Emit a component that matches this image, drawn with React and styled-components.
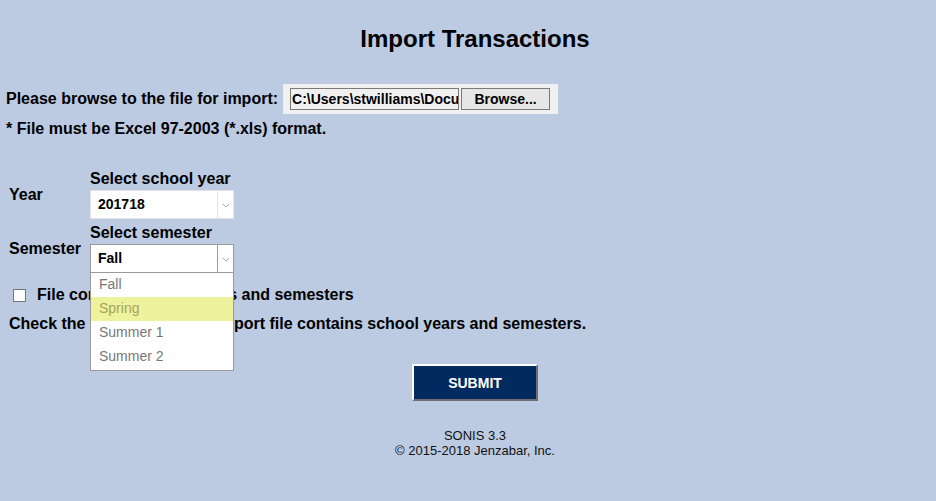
import React from "react";
import styled, { createGlobalStyle } from "styled-components";

const GlobalStyle = createGlobalStyle`
  html, body {
    margin: 0;
    padding: 0;
    background-color: #bccae2;
    font-family: "Liberation Sans", Arial, sans-serif;
    color: #000;
  }
`;

const Page = styled.div`
  width: 936px;
  min-height: 501px;
  box-sizing: border-box;
  padding-top: 25px;
`;

const Centered = styled.div`
  padding-left: 14px;
  text-align: center;
`;

const Title = styled.h1`
  margin: 0;
  font-size: 24px;
  line-height: 28px;
  font-weight: bold;
`;

const FileRow = styled.div`
  display: flex;
  align-items: center;
  margin-top: 31px;
  padding-left: 6px;
  height: 30px;
`;

const Label = styled.span`
  font-size: 16px;
  font-weight: bold;
  line-height: 20px;
  margin-right: ${(p) => p.$gap || 0}px;
`;

const FileBox = styled.div`
  display: flex;
  align-items: center;
  gap: 2px;
  height: 30px;
  padding: 0 8px 0 7px;
  box-sizing: border-box;
  background: #f0f0f0;
`;

const FilePath = styled.div`
  width: 169px;
  height: 22px;
  box-sizing: border-box;
  border: 1px solid #7a7a7a;
  background: #f0f0f0;
  font-size: 14px;
  font-weight: bold;
  line-height: 20px;
  padding-left: 1px;
  white-space: nowrap;
  overflow: hidden;
`;

const BrowseButton = styled.div`
  width: 89px;
  height: 22px;
  box-sizing: border-box;
  border: 1px solid #7a7a7a;
  background: #e6e6e6;
  font-size: 14px;
  font-weight: bold;
  line-height: 20px;
  text-align: center;
`;

const Note = styled.div`
  margin-top: 5px;
  padding-left: 6px;
  font-size: 16px;
  font-weight: bold;
  line-height: 20px;
`;

const FieldGrid = styled.div`
  display: grid;
  grid-template-columns: 81px 144px;
  row-gap: 5px;
  margin-top: 31px;
  padding-left: 9px;
  align-items: center;
`;

const FieldBlock = styled.div`
  position: relative;
  display: flex;
  flex-direction: column;
  gap: 2px;
`;

const Caption = styled.div`
  font-size: 16px;
  font-weight: bold;
  line-height: 18px;
  white-space: nowrap;
`;

const SelectBox = styled.div`
  display: flex;
  height: 29px;
  box-sizing: border-box;
  background: #fff;
  border: 1px solid ${(p) => (p.$open ? "#9a9a9a" : "#e2e2e2")};
`;

const SelectValue = styled.div`
  flex: 1;
  font-size: 14px;
  font-weight: bold;
  line-height: 27px;
  padding-left: 7px;
`;

const Arrow = styled.div`
  width: 15px;
  display: flex;
  align-items: center;
  justify-content: center;
  padding-top: 1px;
  border-left: 1px solid ${(p) => (p.$open ? "#9a9a9a" : "#e2e2e2")};
`;

const DropList = styled.div`
  position: absolute;
  left: 0;
  top: 100%;
  width: 144px;
  box-sizing: border-box;
  background: #fff;
  border: 1px solid #9a9a9a;
  border-top: none;
  padding-bottom: 1px;
  z-index: 5;
`;

const Option = styled.div`
  height: 24px;
  line-height: 23px;
  padding-left: 8px;
  font-size: 14px;
  color: ${(p) => (p.$active ? "#a4a45a" : "#777")};
  background: ${(p) => (p.$active ? "#eef29c" : "#fff")};
`;

const CheckRow = styled.div`
  display: flex;
  align-items: center;
  margin-top: 12px;
  padding-left: 13px;
  height: 20px;
`;

const CheckBox = styled.span`
  width: 13px;
  height: 13px;
  box-sizing: border-box;
  border: 1px solid #777;
  background: #fff;
  margin-right: 11px;
`;

const Hint = styled.div`
  margin-top: 9px;
  padding-left: 9px;
  font-size: 16px;
  font-weight: bold;
  line-height: 20px;
`;

const SubmitButton = styled.button`
  margin-top: 30px;
  width: 126px;
  height: 37px;
  box-sizing: border-box;
  background: #012a61;
  color: #fff;
  font-family: "Liberation Sans", Arial, sans-serif;
  font-size: 14px;
  font-weight: bold;
  border-style: solid;
  border-width: 2px;
  border-color: #ffffff #6f6f6f #6f6f6f #ffffff;
  cursor: pointer;
`;

const Footer = styled.div`
  margin-top: 27px;
  font-size: 13px;
  line-height: 15px;
  color: #111;
`;

const Chevron = () => (
  <svg width="8" height="5" viewBox="0 0 8 5">
    <path d="M1 1 L4 4 L7 1" fill="none" stroke="#a8a8a8" strokeWidth="1" />
  </svg>
);

const semesters = ["Fall", "Spring", "Summer 1", "Summer 2"];

const App = () => {
  return (
    <Page>
      <GlobalStyle />
      <Centered>
        <Title>Import Transactions</Title>
      </Centered>

      <FileRow>
        <Label $gap={5}>Please browse to the file for import:</Label>
        <FileBox>
          <FilePath>C:\Users\stwilliams\Docu</FilePath>
          <BrowseButton>Browse...</BrowseButton>
        </FileBox>
      </FileRow>
      <Note>* File must be Excel 97-2003 (*.xls) format.</Note>

      <FieldGrid>
        <Label>Year</Label>
        <FieldBlock>
          <Caption>Select school year</Caption>
          <SelectBox>
            <SelectValue>201718</SelectValue>
            <Arrow>
              <Chevron />
            </Arrow>
          </SelectBox>
        </FieldBlock>

        <Label>Semester</Label>
        <FieldBlock>
          <Caption>Select semester</Caption>
          <SelectBox $open>
            <SelectValue>Fall</SelectValue>
            <Arrow $open>
              <Chevron />
            </Arrow>
          </SelectBox>
          <DropList>
            {semesters.map((s) => (
              <Option key={s} $active={s === "Spring"}>
                {s}
              </Option>
            ))}
          </DropList>
        </FieldBlock>
      </FieldGrid>

      <CheckRow>
        <CheckBox />
        <Label>File contains school years and semesters</Label>
      </CheckRow>
      <Hint>
        Check the checkbox if this import file contains school years and
        semesters.
      </Hint>

      <Centered>
        <SubmitButton>SUBMIT</SubmitButton>
        <Footer>
          SONIS 3.3
          <br />© 2015-2018 Jenzabar, Inc.
        </Footer>
      </Centered>
    </Page>
  );
};

export default App;
